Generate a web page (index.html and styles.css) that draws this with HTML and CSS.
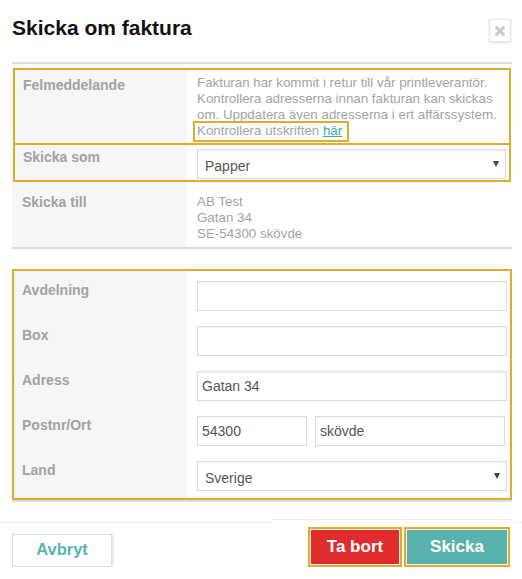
FILE: index.html
```html
<!DOCTYPE html>
<html lang="sv">
<head>
<meta charset="utf-8">
<title>Skicka om faktura</title>
<link rel="stylesheet" href="styles.css">
</head>
<body>
<div class="modal">
  <header class="head">
    <h1 class="title">Skicka om faktura</h1>
    <button class="close" aria-label="Stäng">
      <svg width="12" height="12" viewBox="0 0 12 12"><path d="M2.5 2.5L9.5 9.5M9.5 2.5L2.5 9.5" stroke="#cacaca" stroke-width="3" stroke-linecap="round"/></svg>
    </button>
  </header>

  <section class="panel info">
    <div class="row hl r1">
      <div class="lab">Felmeddelande</div>
      <div class="val">Fakturan har kommit i retur till vår printleverantör.<br>Kontrollera adresserna innan fakturan kan skickas<br>om. Uppdatera även adresserna i ert affärssystem.<br><span class="mark">Kontrollera utskriften <a href="#">här</a></span></div>
    </div>
    <div class="row hl r2">
      <div class="lab">Skicka som</div>
      <div class="val">
        <div class="select"><select><option>Papper</option></select></div>
      </div>
    </div>
    <div class="row r3">
      <div class="lab">Skicka till</div>
      <div class="val">AB Test<br>Gatan 34<br>SE-54300 skövde</div>
    </div>
  </section>

  <section class="panel addr">
    <div class="rows">
      <div class="frow">
        <div class="lab">Avdelning</div>
        <div class="val"><input class="inp" type="text" value=""></div>
      </div>
      <div class="frow">
        <div class="lab">Box</div>
        <div class="val"><input class="inp" type="text" value=""></div>
      </div>
      <div class="frow">
        <div class="lab">Adress</div>
        <div class="val"><input class="inp" type="text" value="Gatan 34"></div>
      </div>
      <div class="frow">
        <div class="lab">Postnr/Ort</div>
        <div class="val split"><input class="inp" type="text" value="54300"><input class="inp" type="text" value="skövde"></div>
      </div>
      <div class="frow">
        <div class="lab">Land</div>
        <div class="val"><div class="select"><select><option>Sverige</option></select></div></div>
      </div>
    </div>
  </section>
</div>

<footer class="foot">
  <button class="cancel">Avbryt</button>
  <div class="actions">
    <button class="btn danger">Ta bort</button>
    <button class="btn primary">Skicka</button>
  </div>
</footer>
</body>
</html>
```

FILE: styles.css
```css
* { box-sizing: border-box; }

body {
  margin: 0;
  font-family: "Liberation Sans", Arial, sans-serif;
  background: #fff;
}

.modal {
  padding: 0 10px 0 12px;
}

.head {
  display: flex;
  justify-content: space-between;
  align-items: flex-start;
  height: 64px;
  padding-top: 16px;
  border-bottom: 2px solid #dedede;
}

.title {
  margin: 0;
  font-size: 21px;
  line-height: 24px;
  font-weight: bold;
  color: #111;
}

.close {
  margin: 3px 1px 0 0;
  width: 22px;
  height: 23px;
  padding: 0;
  border: 1px solid #e4e4e4;
  background: #fff;
  box-shadow: 0 1px 2px rgba(0, 0, 0, 0.12);
  display: flex;
  align-items: center;
  justify-content: center;
}

.panel {
  background: linear-gradient(to right, #f6f6f6 175px, #fff 175px);
  border-bottom: 2px solid #dcdcdc;
}

.info { margin-top: 4px; }

.row {
  display: grid;
  grid-template-columns: 175px 1fr;
}

.hl {
  margin: 0 1px;
  grid-template-columns: 174px 1fr;
  outline: 2px solid #dfad2e;
  outline-offset: -2px;
}

.r1 { height: 77px; }
.r2 { height: 39px; margin-top: -2px; }
.r3 { height: 65px; }

.lab {
  padding-left: 10px;
  font-size: 14px;
  line-height: 16px;
  font-weight: bold;
  color: #a2a2a2;
}

.val {
  padding: 0 5px 0 10px;
  font-size: 13.33px;
  line-height: 16px;
  color: #a3a3a3;
}

.r1 .lab { padding-top: 9px; }
.r1 .val { padding-top: 7px; }
.r2 .lab, .r2 .val { padding-top: 6px; }
.r3 .lab, .r3 .val { padding-top: 12px; }

.mark {
  outline: 2px solid #dfad2e;
  padding: 0 5px 2px 2px;
  margin-left: -2px;
}

.mark a {
  color: #3ea8a5;
  text-decoration: underline;
}

.select {
  position: relative;
  height: 30px;
}

.select select {
  -webkit-appearance: none;
  appearance: none;
  width: 100%;
  height: 30px;
  margin: 0;
  padding: 3px 7px 0;
  border: 1px solid #dcdcdc;
  border-radius: 0;
  background: #fff;
  box-shadow: inset 0 1px 1px rgba(0, 0, 0, 0.05);
  font-family: inherit;
  font-size: 14px;
  color: #555;
  outline: none;
}

.select::after {
  content: "";
  position: absolute;
  right: 7px;
  top: 12px;
  border-left: 3.5px solid transparent;
  border-right: 3.5px solid transparent;
  border-top: 6px solid #444;
  pointer-events: none;
}

.addr { margin-top: 20px; }

.rows {
  display: flex;
  flex-direction: column;
  gap: 15px;
  padding: 12px 0 9px;
  outline: 2px solid #dfad2e;
  outline-offset: -2px;
}

.frow {
  display: grid;
  grid-template-columns: 175px 1fr;
  height: 30px;
}

.frow .lab { padding-top: 1px; }

.split {
  display: grid;
  grid-template-columns: 110px 190px;
  gap: 8px;
}

.inp {
  width: 100%;
  height: 30px;
  margin: 0;
  padding: 0 4px;
  border: 1px solid #dcdcdc;
  border-radius: 0;
  background: #fff;
  box-shadow: inset 0 1px 1px rgba(0, 0, 0, 0.05);
  font-family: inherit;
  font-size: 14px;
  color: #555;
  outline: none;
}

.foot {
  margin-top: 20px;
  border-top: 1px solid #ededed;
  display: flex;
  justify-content: space-between;
  align-items: flex-start;
  padding: 0 9px 0 12px;
}

.cancel {
  margin-top: 11px;
  width: 100px;
  height: 33px;
  padding: 0 0 3px;
  border: 1px solid #dddddd;
  background: #fff;
  box-shadow: 1px 1px 2px rgba(0, 0, 0, 0.15);
  color: #5ab4b0;
  font-family: inherit;
  font-weight: bold;
  font-size: 16.5px;
}

.actions {
  margin-top: -4px;
  width: 241px;
  border-top: 1px solid #ededed;
  background: #fff;
  padding: 9px 5px 0 0;
  display: flex;
  justify-content: flex-end;
  gap: 6px;
}

.btn {
  height: 36px;
  padding: 0;
  border: 1px solid #f2f2f2;
  color: #fff;
  font-family: inherit;
  font-weight: bold;
  font-size: 17px;
  outline: 2px solid #dfad2e;
}

.danger { width: 90px; background: #e02c2c; }
.primary { width: 102px; background: #59b2ae; }
```
